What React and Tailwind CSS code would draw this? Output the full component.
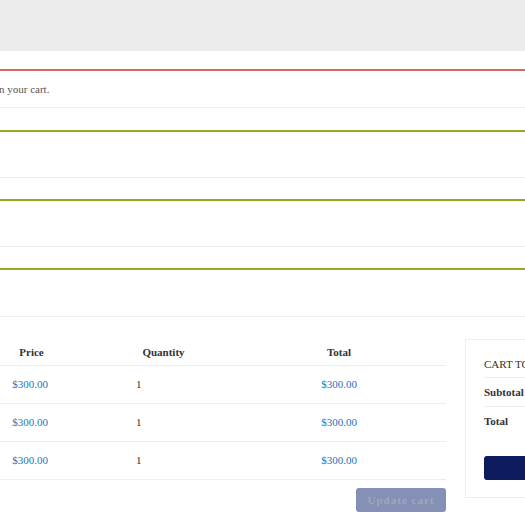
import React from "react";

const rows = [
  { price: "$300.00", qty: 1, total: "$300.00" },
  { price: "$300.00", qty: 1, total: "$300.00" },
  { price: "$300.00", qty: 1, total: "$300.00" },
];

const App = () => {
  return (
    <div className="w-[525px] h-[525px] overflow-hidden bg-white font-['Liberation_Serif',serif] text-[11px] text-[#333]">
      {/* Header band */}
      <div className="h-[51px] bg-[#ececec]" />

      {/* Notices */}
      <div className="pt-[18px] w-[560px]">
        <div className="h-[39px] border-t-2 border-t-[#dd6464] border-b border-b-[#eeeeee] flex items-center text-[#555]">
          <span className="-ml-[1px] leading-[14px]">n your cart.</span>
        </div>
        <div className="mt-[22px] h-[48px] border-t-2 border-t-[#8fae1b] border-b border-b-[#eeeeee]" />
        <div className="mt-[21px] h-[48px] border-t-2 border-t-[#8fae1b] border-b border-b-[#eeeeee]" />
        <div className="mt-[21px] h-[49px] border-t-2 border-t-[#8fae1b] border-b border-b-[#eeeeee]" />
      </div>

      {/* Cart */}
      <div className="mt-[22px] flex items-start">
        {/* Cart table */}
        <div className="w-[446px] shrink-0">
          <div className="h-[27px] flex items-center border-b border-[#eeeeee] font-bold">
            <div className="w-[60px] text-center pl-[3px]">Price</div>
            <div className="w-[207px] text-center">Quantity</div>
            <div className="w-[144px] text-center">Total</div>
          </div>
          {rows.map((row, i) => (
            <div
              key={i}
              className="h-[38px] flex items-center border-b border-[#eeeeee]"
            >
              <div className="w-[60px] text-center text-[#1e73be]">{row.price}</div>
              <div className="w-[207px] pl-[76px]">{row.qty}</div>
              <div className="w-[144px] text-center text-[#1e73be]">{row.total}</div>
            </div>
          ))}
          <div className="mt-[8px] flex justify-end">
            <button className="w-[90px] h-[24px] rounded-[3px] bg-[#8490b5] text-[#a2a7b8] font-bold tracking-[1px] leading-none">
              Update cart
            </button>
          </div>
        </div>

        {/* Cart totals */}
        <div className="ml-[19px] w-[280px] shrink-0 border border-[#eeeeee] px-[18px] pb-[17px]">
          <div className="h-[38px] flex items-end pb-[6px] border-b border-[#eeeeee] leading-[14px] whitespace-nowrap">
            CART TOTALS
          </div>
          <div className="h-[29px] flex items-center border-b border-[#eeeeee] font-bold">
            Subtotal
          </div>
          <div className="h-[28px] flex items-center font-bold">Total</div>
          <button className="mt-[21px] w-full h-[24px] rounded-[3px] bg-[#0c1a5e] text-white font-bold">
            Proceed to checkout
          </button>
        </div>
      </div>
    </div>
  );
};

export default App;
